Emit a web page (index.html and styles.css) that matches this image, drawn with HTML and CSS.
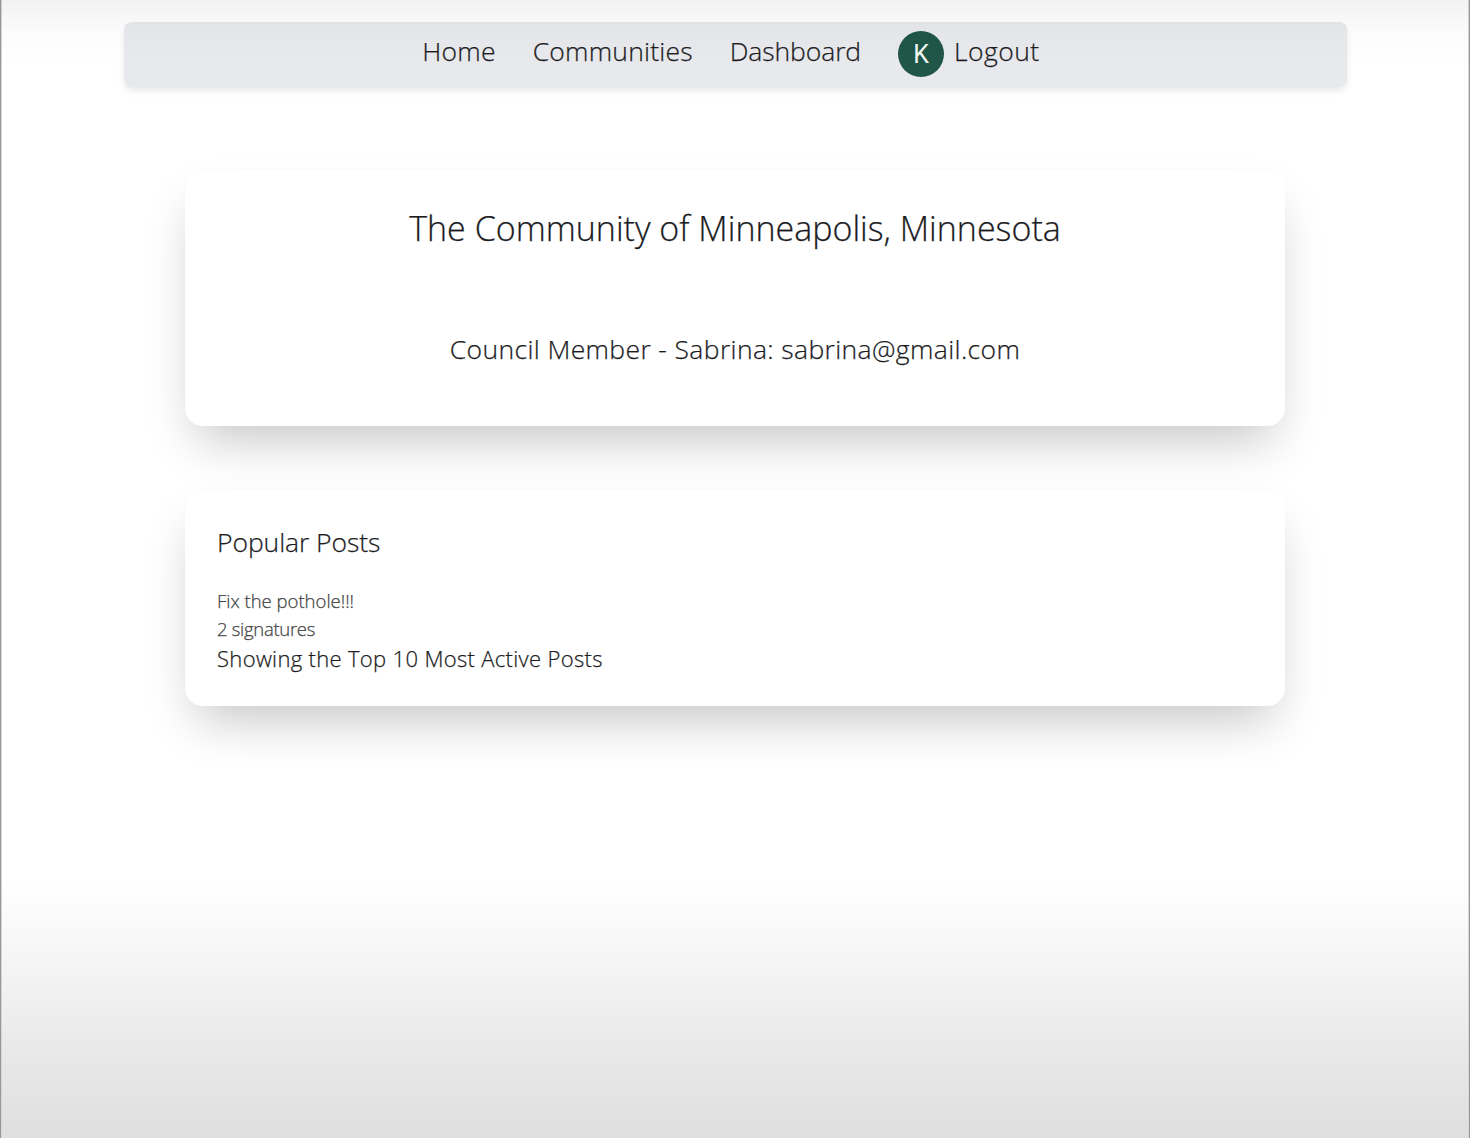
FILE: index.html
```html
<!DOCTYPE html>
<html lang="en">
<head>
    <meta charset="UTF-8">
    <meta name="viewport" content="width=device-width, initial-scale=1.0">
    <title>Community</title>
    <link rel="stylesheet" href="styles.css">
</head>
<body>
    <div class="page">
        <nav class="navbar">
            <a href="#" class="nav-link nav-home">Home</a>
            <a href="#" class="nav-link nav-communities">Communities</a>
            <a href="#" class="nav-link nav-dashboard">Dashboard</a>
            <div class="user">
                <span class="avatar">K</span>
                <a href="#" class="nav-link nav-logout">Logout</a>
            </div>
        </nav>

        <main class="content">
            <section class="card community">
                <h1 class="title">The Community of Minneapolis, Minnesota</h1>
                <p class="council">Council Member - Sabrina: sabrina@gmail.com</p>
            </section>

            <section class="card posts">
                <h2 class="posts-title">Popular Posts</h2>
                <p class="post-name">Fix the pothole!!!</p>
                <p class="post-signatures">2 signatures</p>
                <p class="posts-note">Showing the Top 10 Most Active Posts</p>
            </section>
        </main>
    </div>
</body>
</html>
```

FILE: styles.css
```css
* {
    box-sizing: border-box;
}

body {
    margin: 0;
    font-family: "Open Sans", "Noto Sans", sans-serif;
    font-weight: 300;
    color: #1c1c1f;
    background-color: #ffffff;
    -webkit-text-stroke: 0.25px;
}

.page {
    position: relative;
    height: 1138px;
    padding: 22px 122px 0 123px;
    border-left: 1px solid #969696;
    border-right: 1px solid #969696;
    box-shadow: inset 1px 0 #d8d8d8, inset -1px 0 #d8d8d8;
    background: linear-gradient(rgba(255, 255, 255, 0) 880px, #f3f3f3 975px, #e8e8e8 1055px, #dfdfdf 1138px);
    overflow: hidden;
}

/* soft shade along the top edge */
.page::before {
    content: "";
    position: absolute;
    top: 0;
    left: 0;
    right: 0;
    height: 68px;
    background: linear-gradient(rgba(0, 0, 0, 0.05), rgba(0, 0, 0, 0.012) 35px, rgba(0, 0, 0, 0));
    pointer-events: none;
}

.navbar {
    display: flex;
    justify-content: center;
    height: 65px;
    padding-top: 9px;
    padding-right: 9px;
    gap: 37px;
    background-color: #e8e9ed;
    border-radius: 8px;
    box-shadow: 0 5px 8px -1px rgba(0, 0, 0, 0.07), 0 3px 6px -1px rgba(0, 0, 0, 0.04);
}

.nav-link {
    font-size: 26.5px;
    line-height: 40px;
    color: inherit;
    text-decoration: none;
}

.nav-home {
    letter-spacing: 0.2px;
}

.nav-communities {
    letter-spacing: 0.2px;
}

.nav-dashboard {
    letter-spacing: -0.1px;
}

.nav-logout {
    letter-spacing: 0.45px;
}

.user {
    display: flex;
    gap: 10px;
}

.avatar {
    width: 46px;
    height: 46px;
    border-radius: 50%;
    background-color: #1f5647;
    color: #f1f7f4;
    font-family: Roboto, sans-serif;
    font-size: 25px;
    font-weight: 400;
    line-height: 47px;
    text-align: center;
    -webkit-text-stroke: 0;
}

.content {
    display: flex;
    flex-direction: column;
    gap: 64px;
    padding: 83px 62px 0 61px;
}

.card {
    padding: 32px;
    background-color: #ffffff;
    border-radius: 18px;
    box-shadow: 0 25px 50px -12px rgba(0, 0, 0, 0.23);
}

.card h1,
.card h2,
.card p {
    margin: 0;
    font-weight: inherit;
}

.community {
    height: 256px;
    text-align: center;
}

.card .title {
    margin-top: 1px;
    font-size: 34px;
    line-height: 50px;
}

.council {
    padding-top: 76px;
    font-size: 26.5px;
    line-height: 40px;
    letter-spacing: 0.37px;
}

.posts {
    height: 216px;
}

.posts-title {
    padding-bottom: 25px;
    font-size: 26.5px;
    line-height: 40px;
    letter-spacing: -0.08px;
}

.post-name,
.post-signatures {
    font-size: 18.5px;
    line-height: 28px;
    color: #444444;
}

.post-signatures {
    line-height: 27px;
    letter-spacing: -0.3px;
}

.posts-note {
    font-size: 22px;
    line-height: 33px;
    letter-spacing: 0.33px;
}
```
